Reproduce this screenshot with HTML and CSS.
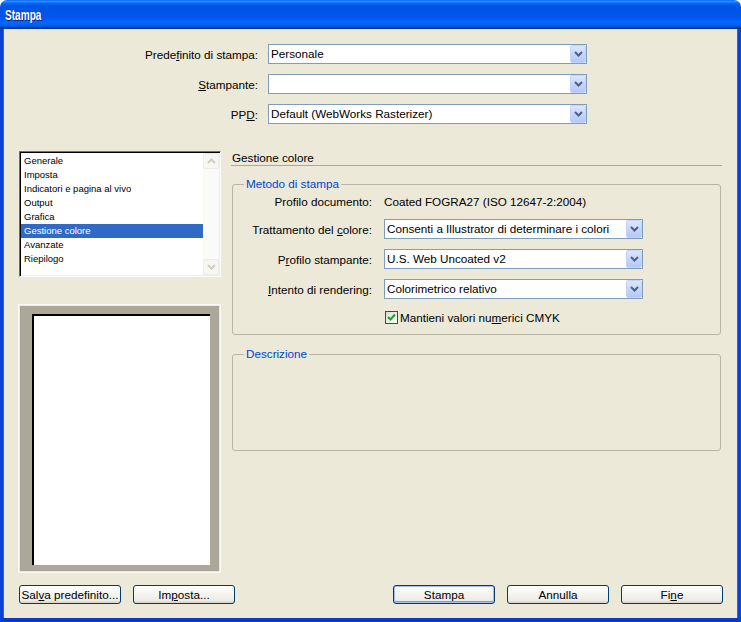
FILE: index.html
```html
<!DOCTYPE html>
<html lang="it">
<head>
<meta charset="utf-8">
<title>Stampa</title>
<link rel="stylesheet" href="styles.css">
</head>
<body>
<div class="window">
  <div class="titlebar"><span class="title">Stampa</span></div>
  <div class="body">
    <div class="topform">
      <label class="lbl">Prede<u>f</u>inito di stampa:</label>
      <div class="combo"><span class="combo-text">Personale</span><span class="combo-btn"><svg width="9" height="6" viewBox="0 0 9 6"><polyline points="1,1 4.5,4.5 8,1" fill="none" stroke="#4D6185" stroke-width="2"/></svg></span></div>
      <label class="lbl"><u>S</u>tampante:</label>
      <div class="combo"><span class="combo-text"></span><span class="combo-btn"><svg width="9" height="6" viewBox="0 0 9 6"><polyline points="1,1 4.5,4.5 8,1" fill="none" stroke="#4D6185" stroke-width="2"/></svg></span></div>
      <label class="lbl">PP<u>D</u>:</label>
      <div class="combo"><span class="combo-text">Default (WebWorks Rasterizer)</span><span class="combo-btn"><svg width="9" height="6" viewBox="0 0 9 6"><polyline points="1,1 4.5,4.5 8,1" fill="none" stroke="#4D6185" stroke-width="2"/></svg></span></div>
    </div>

    <div class="main">
      <div class="leftcol">
        <div class="listbox">
          <ul class="items">
            <li>Generale</li>
            <li>Imposta</li>
            <li>Indicatori e pagina al vivo</li>
            <li>Output</li>
            <li>Grafica</li>
            <li class="sel">Gestione colore</li>
            <li>Avanzate</li>
            <li>Riepilogo</li>
          </ul>
          <div class="vscroll">
            <div class="sbtn"><svg width="9" height="6" viewBox="0 0 9 6"><polyline points="1,5 4.5,1.5 8,5" fill="none" stroke="#CFCDBF" stroke-width="2"/></svg></div>
            <div class="track"></div>
            <div class="sbtn"><svg width="9" height="6" viewBox="0 0 9 6"><polyline points="1,1 4.5,4.5 8,1" fill="none" stroke="#CFCDBF" stroke-width="2"/></svg></div>
          </div>
        </div>
        <div class="preview">
          <div class="preview-bg"><div class="page"></div></div>
        </div>
      </div>

      <div class="rightcol">
        <div class="section-title">Gestione colore</div>
        <fieldset class="group g1">
          <legend>Metodo di stampa</legend>
          <div class="form2">
            <span class="lbl2">Profilo documento:</span>
            <span class="value">Coated FOGRA27 (ISO 12647-2:2004)</span>
            <label class="lbl2">Trattamento del <u>c</u>olore:</label>
            <div class="combo"><span class="combo-text">Consenti a Illustrator di determinare i colori</span><span class="combo-btn"><svg width="9" height="6" viewBox="0 0 9 6"><polyline points="1,1 4.5,4.5 8,1" fill="none" stroke="#4D6185" stroke-width="2"/></svg></span></div>
            <label class="lbl2">P<u>r</u>ofilo stampante:</label>
            <div class="combo"><span class="combo-text">U.S. Web Uncoated v2</span><span class="combo-btn"><svg width="9" height="6" viewBox="0 0 9 6"><polyline points="1,1 4.5,4.5 8,1" fill="none" stroke="#4D6185" stroke-width="2"/></svg></span></div>
            <label class="lbl2"><u>I</u>ntento di rendering:</label>
            <div class="combo"><span class="combo-text">Colorimetrico relativo</span><span class="combo-btn"><svg width="9" height="6" viewBox="0 0 9 6"><polyline points="1,1 4.5,4.5 8,1" fill="none" stroke="#4D6185" stroke-width="2"/></svg></span></div>
            <span></span>
            <label class="check"><span class="box"><svg width="9" height="8" viewBox="0 0 9 8"><polyline points="1,4 3.5,6.5 8,1.5" fill="none" stroke="#21A121" stroke-width="2"/></svg></span><span class="check-text">Mantieni valori nu<u>m</u>erici CMYK</span></label>
          </div>
        </fieldset>
        <fieldset class="group g2">
          <legend>Descrizione</legend>
          <div class="desc"></div>
        </fieldset>
      </div>
    </div>

    <div class="footer">
      <div class="btns">
        <button class="btn">Sal<u>v</u>a predefinito...</button>
        <button class="btn">Im<u>p</u>osta...</button>
      </div>
      <div class="btns">
        <button class="btn default">Stampa</button>
        <button class="btn">Annulla</button>
        <button class="btn">Fi<u>n</u>e</button>
      </div>
    </div>
  </div>
</div>
</body>
</html>
```

FILE: styles.css
```css
* { box-sizing: border-box; }
html, body { margin: 0; padding: 0; background: #ffffff; }
body {
  font-family: "Liberation Sans", Arial, sans-serif;
  font-size: 11.7px;
  color: #000;
}
u { text-decoration: underline; text-underline-offset: 1px; }

.window {
  width: 741px;
  height: 622px;
  display: flex;
  flex-direction: column;
}

.titlebar {
  height: 29px;
  flex: none;
  border-radius: 7px 7px 0 0;
  background: linear-gradient(to bottom, #0058EE 0%, #3593FF 4%, #288EFF 6%, #127DFF 8%, #036FFC 10%, #0262EE 14%, #0057E5 20%, #0054E3 24%, #0055EB 56%, #005BF5 66%, #026AFE 76%, #0062EF 86%, #0052D6 92%, #0040AB 94%, #003092 100%);
  display: flex;
  align-items: center;
  padding: 1px 0 0 5px;
}
.title {
  display: inline-block;
  color: #fff;
  font-family: "Liberation Sans", sans-serif;
  font-weight: bold;
  font-size: 14px;
  transform: scaleX(0.72);
  transform-origin: left center;
  text-shadow: 1px 1px 0 #0A1883;
}

.body {
  flex: 1;
  background: #ECE9D8;
  border-left: 3px solid #0842D6;
  border-right: 3px solid #0842D6;
  border-bottom: 4px solid #0838C8;
  box-shadow: inset 1px 0 0 #166AEE, inset -1px 0 0 #166AEE;
  padding: 15px 15px 0 16px;
  display: flex;
  flex-direction: column;
}

/* top form */
.topform {
  display: grid;
  grid-template-columns: 239px 319px;
  grid-auto-rows: 20px;
  column-gap: 10px;
  row-gap: 10px;
  align-items: center;
}
.lbl { text-align: right; }

.combo {
  height: 20px;
  border: 1px solid #7F9DB9;
  background: #fff;
  display: flex;
  align-items: stretch;
}
.combo-text {
  flex: 1;
  padding-left: 2px;
  line-height: 18px;
  white-space: nowrap;
  overflow: hidden;
}
.combo-btn {
  width: 16px;
  margin: 0;
  border: 1px solid #C3D3FD;
  border-radius: 2px;
  background: linear-gradient(to bottom, #DCE6FE 0%, #C6D6FC 50%, #B4C8F7 100%);
  display: flex;
  align-items: center;
  justify-content: center;
}

/* main */
.main {
  margin-top: 27px;
  display: grid;
  grid-template-columns: 202px 491px;
  column-gap: 10px;
}
.leftcol { display: flex; flex-direction: column; }

.listbox {
  height: 126px;
  border-top: 1px solid #716F64;
  border-left: 1px solid #716F64;
  border-right: 1px solid #FFFFFF;
  border-bottom: 1px solid #FFFFFF;
  box-shadow: inset 1px 1px 0 #000, inset -1px -1px 0 #F1EFE2;
  background: #fff;
  display: flex;
  padding: 1px;
}
.items {
  list-style: none;
  margin: 0;
  padding: 1px 0 0 0;
  flex: 1;
  font-size: 9.5px;
}
.items li {
  height: 14px;
  line-height: 14px;
  padding-left: 3px;
  white-space: nowrap;
}
.items li.sel { background: #316AC5; color: #fff; }

.vscroll {
  width: 16px;
  display: flex;
  flex-direction: column;
  background: #FAFAF6;
}
.sbtn {
  height: 16px;
  border: 1px solid #EEEDE5;
  border-radius: 2px;
  background: #F7F7F2;
  display: flex;
  align-items: center;
  justify-content: center;
}
.track { flex: 1; }

.preview {
  margin-top: 27px;
  margin-left: -1px;
  width: 203px;
  height: 269px;
  border: 1px solid #FBFBF8;
  padding: 1px;
}
.preview-bg {
  height: 100%;
  background: #ACA899;
  padding: 8px 9px 6px 12px;
  display: flex;
}
.page {
  flex: 1;
  background: #fff;
  border-top: 2px solid #000;
  border-left: 2px solid #000;
}

/* right column */
.section-title {
  height: 15px;
  line-height: 14px;
  padding-left: 1px;
  border-bottom: 1px solid #ACA899;
}

.group {
  margin: 0 1px;
  padding: 0;
  border: 1px solid #B8B5A2;
  border-radius: 3px;
  min-width: 0;
}
.group legend {
  margin-left: 11px;
  padding: 0 2px;
  color: #0046D5;
  line-height: 14px;
}
.g1 { margin-top: 11px; padding: 2px 0 9px 0; }
.g2 { margin-top: 12px; }
.desc { height: 89px; }

.form2 {
  display: grid;
  grid-template-columns: 139px 259px;
  grid-template-rows: 16px 20px 20px 20px 16px;
  column-gap: 12px;
  row-gap: 10px;
  align-items: center;
}
.lbl2 { text-align: right; white-space: nowrap; }
.value { white-space: nowrap; }

.check {
  display: flex;
  align-items: center;
  gap: 2px;
  padding-left: 1px;
  white-space: nowrap;
}
.check-text { white-space: nowrap; }
.box {
  width: 13px;
  height: 13px;
  border: 1px solid #1C5180;
  background: linear-gradient(135deg, #DCDCD7 0%, #FFFFFF 100%);
  display: flex;
  align-items: center;
  justify-content: center;
}

/* footer */
.footer {
  margin-top: 12px;
  display: flex;
  justify-content: space-between;
}
.btns { display: flex; gap: 12px; }
.btn {
  width: 102px;
  height: 19px;
  padding: 0;
  font-family: "Liberation Sans", Arial, sans-serif;
  font-size: 11.7px;
  color: #000;
  border: 1px solid #003C74;
  border-radius: 3px;
  background: linear-gradient(to bottom, #FFFFFF 0%, #F4F3EE 50%, #ECEBE6 85%, #D6D0C5 100%);
  line-height: 16px;
  white-space: nowrap;
}
.btn.default {
  box-shadow: inset 0 0 0 1px #A4BEEE, inset 0 -1px 0 1px #7DA2CE;
}
```
